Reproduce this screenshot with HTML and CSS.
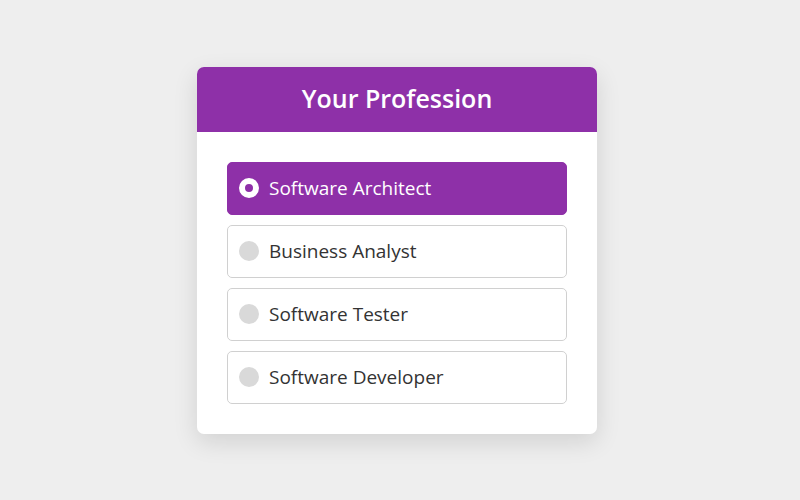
FILE: index.html
```html
<!DOCTYPE html>
<html>
<head>
<meta charset="utf-8">
<link rel="stylesheet" href="styles.css">
</head>
<body>
<div class="card">
  <div class="card-header">Your Profession</div>
  <div class="card-body">
    <label class="option selected"><span class="radio"></span><span class="label">Software Architect</span></label>
    <label class="option"><span class="radio"></span><span class="label">Business Analyst</span></label>
    <label class="option"><span class="radio"></span><span class="label">Software Tester</span></label>
    <label class="option"><span class="radio"></span><span class="label">Software Developer</span></label>
  </div>
</div>
</body>
</html>
```
FILE: styles.css
```css
html, body {
  margin: 0;
  padding: 0;
}
body {
  background: #eeeeee;
  width: 800px;
  height: 500px;
  box-sizing: border-box;
  padding-right: 6px;
  display: flex;
  justify-content: center;
  align-items: flex-start;
  font-family: "Open Sans", "Noto Sans", sans-serif;
}
.card {
  margin-top: 67px;
  width: 400px;
  background: #ffffff;
  border-radius: 7px;
  overflow: hidden;
  box-shadow: 0 8px 25px rgba(0, 0, 0, 0.12);
}
.card-header {
  height: 65px;
  box-sizing: border-box;
  padding-bottom: 3px;
  background: #8e30a8;
  color: #ffffff;
  font-size: 25px;
  font-weight: 600;
  display: flex;
  align-items: center;
  justify-content: center;
}
.card-body {
  padding: 30px;
  display: flex;
  flex-direction: column;
  gap: 10px;
}
.option {
  height: 53px;
  box-sizing: border-box;
  border: 1px solid #d0d0d0;
  border-radius: 5px;
  display: flex;
  align-items: center;
  padding-left: 11px;
  padding-bottom: 1px;
  gap: 10px;
  color: #333333;
  font-size: 19px;
}
.option.selected {
  background: #8e30a8;
  border-color: #8e30a8;
  color: #ffffff;
}
.radio {
  width: 20px;
  height: 20px;
  border-radius: 50%;
  background: #d9d9d9;
  box-sizing: border-box;
}
.option.selected .radio {
  background: #8e30a8;
  border: 6px solid #ffffff;
}
```
